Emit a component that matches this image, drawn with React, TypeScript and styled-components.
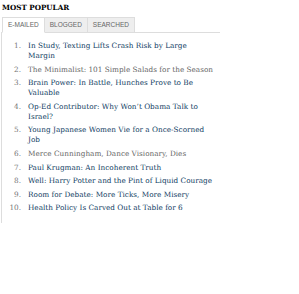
import styled, { createGlobalStyle } from 'styled-components';

const GlobalStyle = createGlobalStyle`
  html, body {
    margin: 0;
    padding: 0;
    background: #fff;
  }
`;

const stories = [
  { title: 'In Study, Texting Lifts Crash Risk by Large Margin', visited: false },
  { title: 'The Minimalist: 101 Simple Salads for the Season', visited: true },
  { title: 'Brain Power: In Battle, Hunches Prove to Be Valuable', visited: false },
  { title: 'Op-Ed Contributor: Why Won\u2019t Obama Talk to Israel?', visited: false },
  { title: 'Young Japanese Women Vie for a Once-Scorned Job', visited: false },
  { title: 'Merce Cunningham, Dance Visionary, Dies', visited: true },
  { title: 'Paul Krugman: An Incoherent Truth', visited: false },
  { title: 'Well: Harry Potter and the Pint of Liquid Courage', visited: false },
  { title: 'Room for Debate: More Ticks, More Misery', visited: false },
  { title: 'Health Policy Is Carved Out at Table for 6', visited: false },
];

const Module = styled.div`
  width: 219px;
  padding: 4px 0 0 1px;
`;

const Heading = styled.h6`
  margin: 0 0 5px 1px;
  font-family: 'DejaVu Serif', Georgia, serif;
  font-size: 7.2px;
  font-weight: bold;
  line-height: 8px;
  color: #000;
`;

const Tabs = styled.ul`
  display: flex;
  margin: 0;
  padding: 0 0 0 1px;
  list-style: none;
  border-bottom: 1px solid #ddd;
  height: 15px;
`;

const Tab = styled.li<{ $active?: boolean }>`
  font-family: 'Liberation Sans', Arial, sans-serif;
  font-size: 6.5px;
  line-height: 14px;
  color: #666;
  padding: 0 5px;
  background: ${({ $active }) => ($active ? '#fff' : '#eee')};
  border: 1px solid #ddd;
  border-bottom: ${({ $active }) => ($active ? '1px solid #fff' : '1px solid #ddd')};
  border-left: ${({ $active }) => ($active ? '1px solid #ddd' : 'none')};
  height: 14px;
`;

const Panel = styled.ol`
  margin: 0;
  padding: 8px 0 6px 0;
  list-style: none;
  border-left: 1px solid #ddd;
`;

const Item = styled.li`
  display: flex;
  margin-bottom: 3.6px;
  font-family: 'DejaVu Serif', Georgia, serif;
  font-size: 7.3px;
  line-height: 10px;
`;

const Num = styled.span`
  width: 19px;
  flex: none;
  text-align: right;
  color: #777;
  padding-right: 7px;
`;

const Link = styled.a<{ $visited?: boolean }>`
  color: ${({ $visited }) => ($visited ? '#666' : '#0f3d63')};
  text-decoration: none;
  width: 188px;
`;

export default function App() {
  return (
    <>
      <GlobalStyle />
      <Module>
        <Heading>MOST POPULAR</Heading>
        <Tabs>
          <Tab $active>E-MAILED</Tab>
          <Tab>BLOGGED</Tab>
          <Tab>SEARCHED</Tab>
        </Tabs>
        <Panel>
          {stories.map((s, i) => (
            <Item key={i}>
              <Num>{i + 1}.</Num>
              <Link href="#" $visited={s.visited}>{s.title}</Link>
            </Item>
          ))}
        </Panel>
      </Module>
    </>
  );
}
